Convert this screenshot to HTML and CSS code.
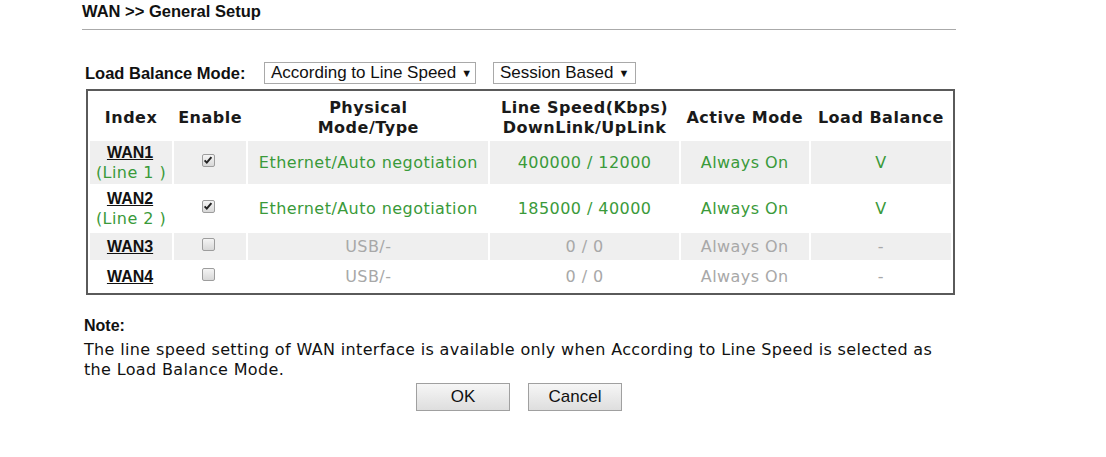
FILE: index.html
```html
<!DOCTYPE html>
<html>
<head>
<meta charset="utf-8">
<link rel="stylesheet" href="styles.css">
</head>
<body>
<div class="page">
  <div class="title">WAN &gt;&gt; General Setup</div>
  <div class="mode-row">
    <span class="mode-label">Load Balance Mode:</span>
    <span class="select sel-speed">According to Line Speed <span class="arrow">▼</span></span>
    <span class="select sel-session">Session Based <span class="arrow">▼</span></span>
  </div>
  <table class="wan">
    <thead>
      <tr>
        <th class="c-index">Index</th>
        <th class="c-enable">Enable</th>
        <th class="c-phys">Physical<br>Mode/Type</th>
        <th class="c-speed">Line Speed(Kbps)<br>DownLink/UpLink</th>
        <th class="c-active">Active Mode</th>
        <th class="c-lb">Load Balance</th>
      </tr>
    </thead>
    <tbody>
      <tr class="odd r1 on">
        <td><a class="wanlink">WAN1</a><br><span class="line">(Line 1 )</span></td>
        <td><span class="cb checked"><svg viewBox="0 0 12 12" width="12" height="12"><path d="M2.6 6.4 L4.8 8.6 L9.4 3.2" fill="none" stroke="#222" stroke-width="2"/></svg></span></td>
        <td>Ethernet/Auto negotiation</td>
        <td>400000 / 12000</td>
        <td>Always On</td>
        <td>V</td>
      </tr>
      <tr class="r2 on">
        <td><a class="wanlink">WAN2</a><br><span class="line">(Line 2 )</span></td>
        <td><span class="cb checked"><svg viewBox="0 0 12 12" width="12" height="12"><path d="M2.6 6.4 L4.8 8.6 L9.4 3.2" fill="none" stroke="#222" stroke-width="2"/></svg></span></td>
        <td>Ethernet/Auto negotiation</td>
        <td>185000 / 40000</td>
        <td>Always On</td>
        <td>V</td>
      </tr>
      <tr class="odd r3 off">
        <td><a class="wanlink">WAN3</a></td>
        <td><span class="cb"></span></td>
        <td>USB/-</td>
        <td>0 / 0</td>
        <td>Always On</td>
        <td>-</td>
      </tr>
      <tr class="r4 off">
        <td><a class="wanlink">WAN4</a></td>
        <td><span class="cb"></span></td>
        <td>USB/-</td>
        <td>0 / 0</td>
        <td>Always On</td>
        <td>-</td>
      </tr>
    </tbody>
  </table>
  <div class="note">
    <div class="note-title">Note:</div>
    <div class="note-text">The line speed setting of WAN interface is available only when According to Line Speed is selected as the Load Balance Mode.</div>
  </div>
  <div class="buttons">
    <span class="btn">OK</span>
    <span class="btn">Cancel</span>
  </div>
</div>
</body>
</html>
```

FILE: styles.css
```css
html, body {
  margin: 0;
  padding: 0;
  background: #fff;
}
.page {
  width: 874px;
  margin-left: 82px;
  font-family: "DejaVu Sans", Verdana, sans-serif;
  letter-spacing: 0.45px;
}
.title {
  font: bold 16.5px "Liberation Sans", Arial, sans-serif;
  letter-spacing: 0;
  color: #111;
  padding-top: 2px;
  height: 27px;
  border-bottom: 1px solid #aaa;
}
.mode-row {
  display: flex;
  align-items: center;
  margin-top: 32px;
  height: 22px;
}
.mode-label {
  font: bold 16.5px "Liberation Sans", Arial, sans-serif;
  letter-spacing: 0;
  color: #111;
  margin-left: 3px;
  width: 179px;
}
.select {
  box-sizing: border-box;
  height: 22px;
  border: 1px solid #a9a9a9;
  font: 17px "Liberation Sans", Arial, sans-serif;
  letter-spacing: 0;
  color: #111;
  display: flex;
  align-items: center;
  padding-left: 6px;
  background: #fff;
}
.select .arrow {
  font-size: 11px;
  margin-left: 5px;
}
.sel-speed { width: 212px; }
.sel-session { width: 143px; margin-left: 17px; }
.wan {
  margin-top: 5px;
  margin-left: 4px;
  border: 2px solid #5a5a5a;
  border-spacing: 2px;
  width: 869px;
  table-layout: fixed;
  font-size: 16px;
}
.wan th {
  font-weight: bold;
  color: #1a1a1a;
  height: 46px;
  line-height: 20px;
  padding: 4px 0 0 0;
  box-sizing: border-box;
  text-align: center;
  letter-spacing: 0.5px;
}
.c-index { width: 82px; }
.c-enable { width: 72px; }
.c-phys { width: 240px; }
.c-speed { width: 188px; }
.c-active { width: 128px; }
.c-lb { width: 140px; }
.wan td {
  text-align: center;
  padding: 0;
  line-height: 20px;
}
.odd td { background: #efefef; }
.r1 td { height: 43px; }
.r2 td { height: 45px; }
.r3 td { height: 27px; }
.r4 td { height: 29px; }
.on td { color: #3a9a3a; }
.off td { color: #a8a8a8; }
.wanlink {
  font: bold 16px "Liberation Sans", Arial, sans-serif;
  letter-spacing: 0;
  color: #111;
  text-decoration: underline;
  position: relative;
  left: -1px;
}
.line { color: #3a9a3a; }
.cb {
  display: inline-block;
  box-sizing: border-box;
  width: 13px;
  height: 13px;
  border: 1px solid #9d9d9d;
  border-radius: 2px;
  background: linear-gradient(#f4f4f4, #d8d8d8);
  vertical-align: middle;
  position: relative;
  top: -3px;
  left: -2px;
}
.cb svg {
  display: block;
  margin: -1px 0 0 -1px;
}
.note {
  margin-top: 21px;
  margin-left: 2px;
}
.note-title {
  font: bold 16px "Liberation Sans", Arial, sans-serif;
  letter-spacing: 0;
  color: #111;
  line-height: 20px;
}
.note-text {
  font-size: 16px;
  line-height: 20px;
  color: #111;
  margin-top: 4px;
  letter-spacing: 0.35px;
}
.buttons {
  display: flex;
  justify-content: center;
  gap: 18px;
  margin-top: 3px;
  margin-left: 57px;
  width: 760px;
}
.btn {
  box-sizing: border-box;
  width: 94px;
  height: 28px;
  border: 1px solid #a0a0a0;
  background: linear-gradient(#f6f6f6, #dedede);
  font: 17px "Liberation Sans", Arial, sans-serif;
  letter-spacing: 0;
  color: #111;
  display: flex;
  align-items: center;
  justify-content: center;
}
```
